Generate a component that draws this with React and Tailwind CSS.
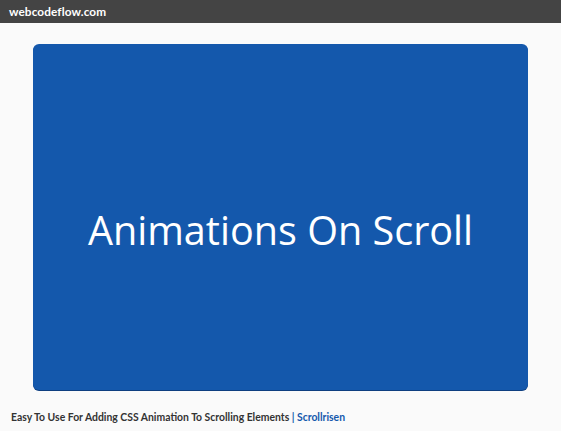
export default function App() {
  return (
    <div className="min-h-screen w-full bg-[#fafafa] flex flex-col" style={{ height: 431 }}>
      <header className="h-[23px] shrink-0 bg-[#444444] flex items-center px-[9px]">
        <span className="text-white font-bold text-[11.8px] font-['Lato',sans-serif] tracking-[0.1px]">webcodeflow.com</span>
      </header>
      <main className="flex flex-col px-[33px] pt-[21px]">
        <div className="h-[346px] rounded-[6px] bg-[#1458ac] shadow-[0_1px_0_#0e3f80] flex items-center justify-center pt-[28px]">
          <h1 className="text-white text-[39.6px] font-['Open_Sans',sans-serif] font-normal leading-none">Animations On Scroll</h1>
        </div>
      </main>
      <footer className="flex-1 flex items-center px-[11px] pt-[15px]">
        <p className="text-[10.4px] font-bold font-['Lato',sans-serif] text-[#333]">
          Easy To Use For Adding CSS Animation To Scrolling Elements <span className="text-[#1458ac]">| Scrollrisen</span>
        </p>
      </footer>
    </div>
  );
}
